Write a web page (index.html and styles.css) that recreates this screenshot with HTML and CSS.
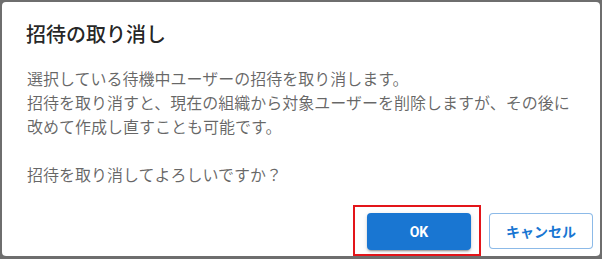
FILE: index.html
```html
<!DOCTYPE html>
<html lang="ja">
<head>
<meta charset="utf-8">
<link rel="stylesheet" href="styles.css">
</head>
<body>
<div class="dialog">
  <h2 class="title">招待の取り消し</h2>
  <div class="content">
    <p class="text">選択している待機中ユーザーの招待を取り消します。<br>招待を取り消すと、現在の組織から対象ユーザーを削除しますが、その後に<br>改めて作成し直すことも可能です。<br><br>招待を取り消してよろしいですか？</p>
  </div>
  <div class="actions">
    <div class="highlight">
      <button class="btn btn-primary">OK</button>
    </div>
    <button class="btn btn-outline">キャンセル</button>
  </div>
</div>
</body>
</html>
```

FILE: styles.css
```css
html, body {
  margin: 0;
  padding: 0;
}
body {
  background: #6e6e6e;
  padding: 2px 2px 3px 2px;
  width: 598px;
  height: 254px;
  font-family: "Noto Sans CJK JP", Roboto, "Noto Sans", sans-serif;
}
.dialog {
  background: #fff;
  border-radius: 4px;
  height: 254px;
  display: flex;
  flex-direction: column;
  overflow: hidden;
}
.title {
  margin: 0;
  padding: 16px 24px;
  font-size: 20px;
  line-height: 32px;
  font-weight: 500;
  color: rgba(0, 0, 0, 0.87);
}
.content {
  padding: 0 24px 19px 25px;
}
.text {
  margin: 0;
  font-size: 16px;
  line-height: 24px;
  color: rgba(0, 0, 0, 0.6);
}
.actions {
  display: flex;
  justify-content: flex-end;
  align-items: flex-start;
  gap: 8px;
  padding: 0 7px 0 0;
}
.highlight {
  border: 2px solid #e3151a;
  padding: 6px 8px 4px 12px;
  display: flex;
}
.btn {
  font-family: Roboto, "Noto Sans CJK JP", sans-serif;
  font-size: 14px;
  font-weight: 700;
  width: 104px;
  border-radius: 4px;
  cursor: pointer;
  padding: 0;
}
.btn-primary {
  height: 37px;
  background: #1976d2;
  color: #fff;
  border: none;
  box-shadow: 0 3px 1px -2px rgba(0,0,0,0.2), 0 2px 2px 0 rgba(0,0,0,0.14), 0 1px 5px 0 rgba(0,0,0,0.12);
}
.btn-outline {
  margin-top: 8px;
  height: 36px;
  background: #fff;
  color: #1976d2;
  border: 1px solid rgba(25, 118, 210, 0.5);
  font-family: "Noto Sans CJK JP", sans-serif;
}
```
